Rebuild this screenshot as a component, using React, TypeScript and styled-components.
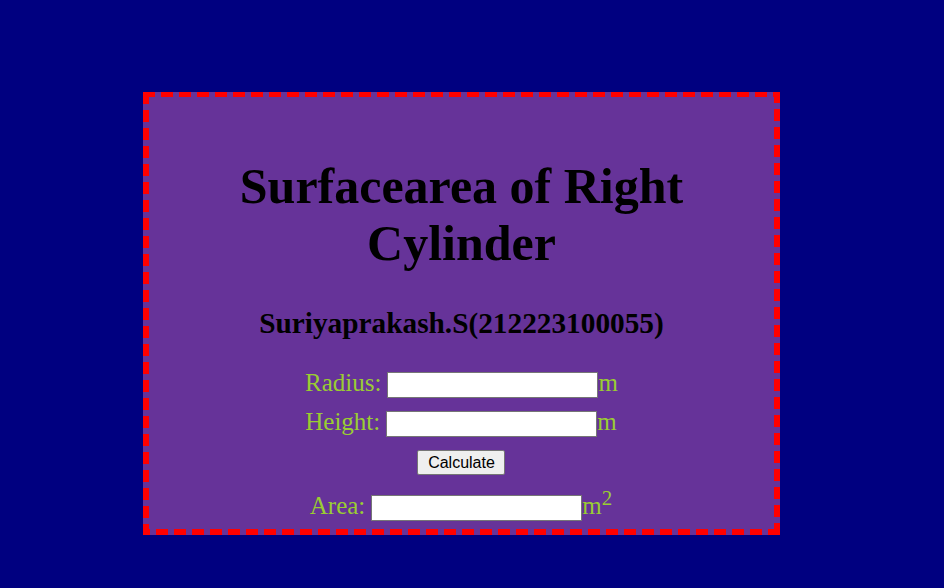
import React from "react";
import styled, { createGlobalStyle } from "styled-components";

const Global = createGlobalStyle`
  html, body { margin: 0; padding: 0; background: #000080; }
  body { font-family: "Liberation Serif", "Times New Roman", serif; }
`;

const Page = styled.div`
  width: 944px;
  height: 588px;
  background: #000080;
  padding: 92px 0 0 143px;
  box-sizing: border-box;
`;

const dash = (dir: string) =>
  `repeating-linear-gradient(${dir}, #ff0000 0 12px, transparent 12px 18px)`;

const Card = styled.div`
  width: 637px;
  height: 443px;
  box-sizing: border-box;
  background:
    ${dash("to right")} top left / 100% 5px no-repeat,
    ${dash("to left")} bottom left / 100% 6px no-repeat,
    ${dash("to bottom")} top left / 6px 100% no-repeat,
    ${dash("to top")} top right / 6px 100% no-repeat,
    #663399;
  display: flex;
  flex-direction: column;
  align-items: center;
  padding: 66px 6px 6px;
`;

const Title = styled.h1`
  margin: 0;
  font-size: 50px;
  font-weight: bold;
  color: #000;
  text-align: center;
  line-height: 57px;
  width: 500px;
`;

const Author = styled.h2`
  margin: 35px 0 0;
  font-size: 29.3px;
  font-weight: bold;
  color: #000;
  line-height: 33px;
`;

const Form = styled.div`
  margin-top: 32px;
  display: flex;
  flex-direction: column;
  align-items: center;
`;

const Row = styled.div<{ $shift?: number; $top?: number }>`
  display: flex;
  align-items: center;
  font-size: 25px;
  color: #9acd32;
  height: 26px;
  margin-top: ${(p) => p.$top ?? 0}px;
  margin-left: ${(p) => p.$shift ?? 0}px;
`;

const Label = styled.span`
  margin-right: 6px;
  margin-bottom: 4px;
`;

const Field = styled.input`
  width: 211px;
  height: 26px;
  box-sizing: border-box;
  border: 1px solid #767676;
  background: #fff;
  padding: 1px 2px;
  margin: 0;
  font-size: 16px;
`;

const Unit = styled.span`
  margin-bottom: 4px;
  sup {
    font-size: 21px;
    line-height: 0;
  }
`;

const Button = styled.button`
  margin-top: 13px;
  width: 88px;
  height: 25px;
  box-sizing: border-box;
  font-family: "Liberation Sans", Arial, sans-serif;
  font-size: 16px;
  color: #000;
  background: #efefef;
  border: 1px solid #767676;
  border-radius: 2px;
  padding: 0;
`;

export default function App() {
  return (
    <>
      <Global />
      <Page>
        <Card>
          <Title>Surfacearea of Right Cylinder</Title>
          <Author>Suriyaprakash.S(212223100055)</Author>
          <Form>
            <Row $shift={0}>
              <Label>Radius:</Label>
              <Field type="text" />
              <Unit>m</Unit>
            </Row>
            <Row $top={13} $shift={-1}>
              <Label>Height:</Label>
              <Field type="text" />
              <Unit>m</Unit>
            </Row>
            <Button>Calculate</Button>
            <Row $top={20} $shift={-1}>
              <Label>Area:</Label>
              <Field type="text" />
              <Unit>
                m<sup>2</sup>
              </Unit>
            </Row>
          </Form>
        </Card>
      </Page>
    </>
  );
}
